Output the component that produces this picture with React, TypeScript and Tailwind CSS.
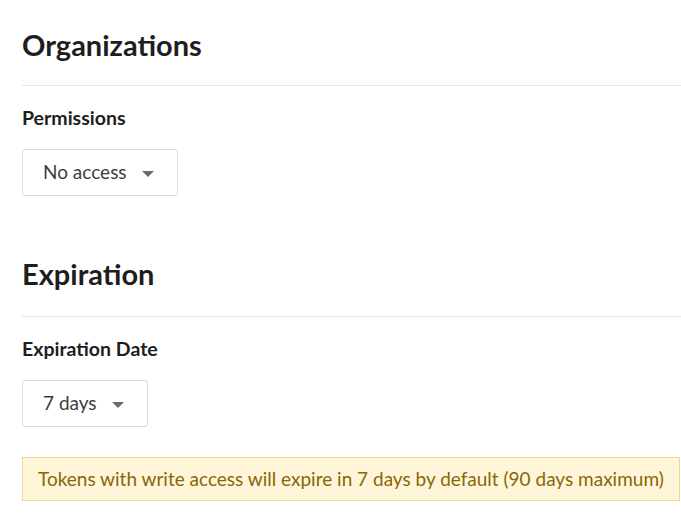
import { useState } from "react";

const font = { fontFamily: "Lato, 'Noto Sans', sans-serif" };

function Dropdown({ value }: { value: string }) {
  return (
    <button className="flex h-[47px] items-center gap-[14px] rounded-[3px] border border-[#dcdcdc] bg-white pl-5 pr-[22px] text-[19px] text-[#3d3d3d]">
      <span>{value}</span>
      <svg width="14" height="7" viewBox="0 0 14 7" className="mt-[3px]">
        <path d="M1 0h12L7 6z" fill="#6b6b6b" />
      </svg>
    </button>
  );
}

export default function App() {
  const [perm] = useState("No access");
  const [exp] = useState("7 days");

  return (
    <div className="min-h-screen bg-white pl-[22px]" style={font}>
      {/* Organizations */}
      <section className="pt-[27px]">
        <h2 className="border-b border-[#e5e5e5] pb-[22px] text-[29px] font-bold leading-[36px] text-[#1e1e1e]">
          Organizations
        </h2>
        <div className="mt-[20px] text-[19.5px] font-bold leading-[24px] text-[#1e1e1e]">
          Permissions
        </div>
        <div className="mt-[19px] flex">
          <Dropdown value={perm} />
        </div>
      </section>

      {/* Expiration */}
      <section className="pt-[60px]">
        <h2 className="border-b border-[#e5e5e5] pb-[24px] text-[29px] font-bold leading-[36px] text-[#1e1e1e]">
          Expiration
        </h2>
        <div className="mt-[20px] text-[19.5px] font-bold leading-[24px] text-[#1e1e1e]">
          Expiration Date
        </div>
        <div className="mt-[19px] flex">
          <Dropdown value={exp} />
        </div>
        <div className="mt-[30px] mr-px border border-[#eed98f] bg-[#fff6d9] px-[15px] py-[9px] text-[19px] leading-[24px] text-[#8b6508]">
          Tokens with write access will expire in 7 days by default (90 days maximum)
        </div>
      </section>
    </div>
  );
}
